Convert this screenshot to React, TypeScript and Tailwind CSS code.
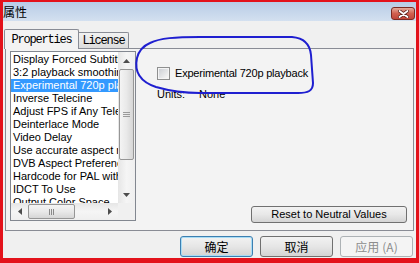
import React from "react";

type Dir = "up" | "down" | "left" | "right";

function Arrow({ dir }: { dir: Dir }) {
  if (dir === "up")
    return (
      <svg width="7" height="4" viewBox="0 0 7 4">
        <polygon points="0,4 3.5,0 7,4" fill="#4d4d4d" />
      </svg>
    );
  if (dir === "down")
    return (
      <svg width="7" height="4" viewBox="0 0 7 4">
        <polygon points="0,0 7,0 3.5,4" fill="#4d4d4d" />
      </svg>
    );
  if (dir === "left")
    return (
      <svg width="4" height="7" viewBox="0 0 4 7">
        <polygon points="4,0 4,7 0,3.5" fill="#4d4d4d" />
      </svg>
    );
  return (
    <svg width="4" height="7" viewBox="0 0 4 7">
      <polygon points="0,0 0,7 4,3.5" fill="#4d4d4d" />
    </svg>
  );
}

const items = [
  "Display Forced Subtitles",
  "3:2 playback smoothing",
  "Experimental 720p playback",
  "Inverse Telecine",
  "Adjust FPS if Any Telecine",
  "Deinterlace Mode",
  "Video Delay",
  "Use accurate aspect ratio",
  "DVB Aspect Preferences",
  "Hardcode for PAL with ffdshow",
  "IDCT To Use",
  "Output Color Space",
];

export default function App() {
  return (
    <div className="relative w-[419px] h-[263px] overflow-hidden font-['Liberation_Sans',Arial,sans-serif] text-[11px] text-black">
      <div className="w-full h-full flex flex-col border-solid border-[#e3121b] border-t-2 border-l-[3px] border-r-[3px] border-b-[5px] bg-[#f0f0f0]">
        {/* Title bar */}
        <div className="h-[19px] shrink-0 flex items-start justify-between bg-gradient-to-b from-[#b8cce6] to-[#d3e0f0]">
          <span className="mt-[3px] text-[12px] leading-[14px] font-['Noto_Sans_CJK_SC',sans-serif] text-black">
            属性
          </span>
          <div className="mt-[5px] mr-[1px] w-[24px] h-[13px] rounded-[3px] border border-[#7b2b22] bg-gradient-to-b from-[#e4a99c] via-[#d0604f] to-[#c0463a] flex items-center justify-center">
            <svg width="11" height="8" viewBox="0 0 11 8">
              <path d="M1.5 1 L9.5 7 M9.5 1 L1.5 7" stroke="#5a2018" strokeWidth="3.4" strokeLinecap="round" />
              <path d="M1.5 1 L9.5 7 M9.5 1 L1.5 7" stroke="#ffffff" strokeWidth="1.8" strokeLinecap="round" />
            </svg>
          </div>
        </div>

        {/* Body */}
        <div className="flex-1 flex flex-col pt-[8px] pl-[2px] pr-[2px]">
          {/* Tabs */}
          <div className="h-[19px] flex items-end relative z-10">
            <div className="-ml-px mb-[-1px] w-[75px] h-[20px] rounded-t-[2px] border border-b-0 border-[#898c95] bg-[#f3f3f3] flex items-center justify-center font-['Liberation_Mono',monospace] text-[12px] tracking-[-1.2px] leading-none">
              Properties
            </div>
            <div className="w-[50px] h-[16px] rounded-tr-[2px] border-t border-r border-[#898c95] bg-gradient-to-b from-[#f2f2f2] to-[#dcdcdc] flex items-center justify-center font-['Liberation_Mono',monospace] text-[12px] tracking-[-1.2px] leading-none">
              License
            </div>
          </div>

          {/* Panel */}
          <div className="h-[183px] border border-[#898c95] bg-[#f3f3f3] flex">
            {/* Listbox */}
            <div className="ml-[4px] mt-[2px] w-[126px] h-[170px] border border-[#828790] bg-white grid grid-cols-[107px_17px] grid-rows-[151px_17px]">
              <div className="overflow-hidden whitespace-nowrap pt-px">
                {items.map((t, i) => (
                  <div
                    key={t}
                    className={
                      i === 2
                        ? "h-[13px] leading-[13px] pl-[2px] bg-[#3399ff] text-white"
                        : "h-[13px] leading-[13px] pl-[2px]"
                    }
                  >
                    {t}
                  </div>
                ))}
              </div>
              {/* vertical scrollbar */}
              <div className="flex flex-col bg-gradient-to-r from-[#e6e6e6] via-[#f5f5f5] to-[#efefef]">
                <div className="h-[17px] flex items-center justify-center">
                  <Arrow dir="up" />
                </div>
                <div className="h-[91px] mx-[1px] rounded-[2px] border border-[#969696] bg-gradient-to-r from-[#f4f4f4] via-[#e9e9e9] to-[#d6d6d6] flex flex-col items-center justify-center gap-[1px]">
                  <div className="w-[7px] h-px bg-[#9a9a9a]" />
                  <div className="w-[7px] h-px bg-[#9a9a9a]" />
                  <div className="w-[7px] h-px bg-[#9a9a9a]" />
                </div>
                <div className="flex-1" />
                <div className="h-[17px] flex items-center justify-center">
                  <Arrow dir="down" />
                </div>
              </div>
              {/* horizontal scrollbar */}
              <div className="flex bg-gradient-to-b from-[#e6e6e6] via-[#f5f5f5] to-[#efefef]">
                <div className="w-[17px] flex items-center justify-center">
                  <Arrow dir="left" />
                </div>
                <div className="w-[47px] my-[1px] rounded-[2px] border border-[#969696] bg-gradient-to-b from-[#f4f4f4] via-[#e9e9e9] to-[#d6d6d6] flex items-center justify-center gap-[1px]">
                  <div className="h-[6px] w-px bg-[#8a8a8a]" />
                  <div className="h-[6px] w-px bg-[#8a8a8a]" />
                  <div className="h-[6px] w-px bg-[#8a8a8a]" />
                </div>
                <div className="flex-1" />
                <div className="w-[17px] flex items-center justify-center">
                  <Arrow dir="right" />
                </div>
              </div>
              <div className="bg-[#f0f0f0]" />
            </div>

            {/* Right side */}
            <div className="flex-1 flex flex-col pl-[21px] pt-[18px]">
              <div className="h-[13px] flex items-center gap-[5px]">
                <div className="w-[13px] h-[13px] border border-[#8e8f8f] bg-[#f4f4f4] p-px">
                  <div className="w-full h-full bg-gradient-to-br from-[#cdd0d5] to-[#f7f7f7]" />
                </div>
                <span className="leading-[13px] tracking-[-0.2px]">Experimental 720p playback</span>
              </div>
              <div className="mt-[8px] h-[13px] flex items-center leading-[13px]">
                <span className="w-[42px]">Units:</span>
                <span>None</span>
              </div>
              <div className="mt-auto self-end mr-[6px] mb-[7px] w-[156px] h-[17px] rounded-[3px] border border-[#707070] bg-gradient-to-b from-[#f2f2f2] via-[#e8e8e8] to-[#d4d4d4] flex items-center justify-center leading-none">
                Reset to Neutral Values
              </div>
            </div>
          </div>

          {/* Footer */}
          <div className="h-[27px] pt-[5px] pr-[1px] flex justify-end gap-[7px] font-['Noto_Sans_CJK_SC',sans-serif] text-[12px]">
            <div className="w-[73px] h-[21px] rounded-[3px] border border-[#3c7fb1] shadow-[inset_0_0_0_1px_#a8dcf5] bg-gradient-to-b from-[#f2f2f2] via-[#e6e6e6] to-[#d4d4d4] flex items-center justify-center leading-none">
              确定
            </div>
            <div className="w-[73px] h-[21px] rounded-[3px] border border-[#707070] bg-gradient-to-b from-[#f2f2f2] via-[#e6e6e6] to-[#d4d4d4] flex items-center justify-center leading-none">
              取消
            </div>
            <div className="w-[73px] h-[21px] rounded-[3px] border border-[#adb2b5] bg-[#f4f4f4] text-[#8d8d8d] flex items-center justify-center leading-none">
              应用<span className="ml-[3px]">(A)</span>
            </div>
          </div>
        </div>
      </div>

      {/* Hand-drawn annotation loop */}
      <svg className="absolute left-0 top-0 pointer-events-none" width="419" height="263" viewBox="0 0 419 263">
        <path
          d="M150 43 C160 38 175 37 200 37 L292 37 C304 38 310 44 311 55 L313 83 C313 91 308 93 298 93 L200 93 C185 93 170 91 156 87 C141 82 134 72 137 58 C139 50 143 46 150 43 Z"
          fill="none"
          stroke="#1f1fd0"
          strokeWidth="2"
          strokeLinejoin="round"
        />
      </svg>
    </div>
  );
}
